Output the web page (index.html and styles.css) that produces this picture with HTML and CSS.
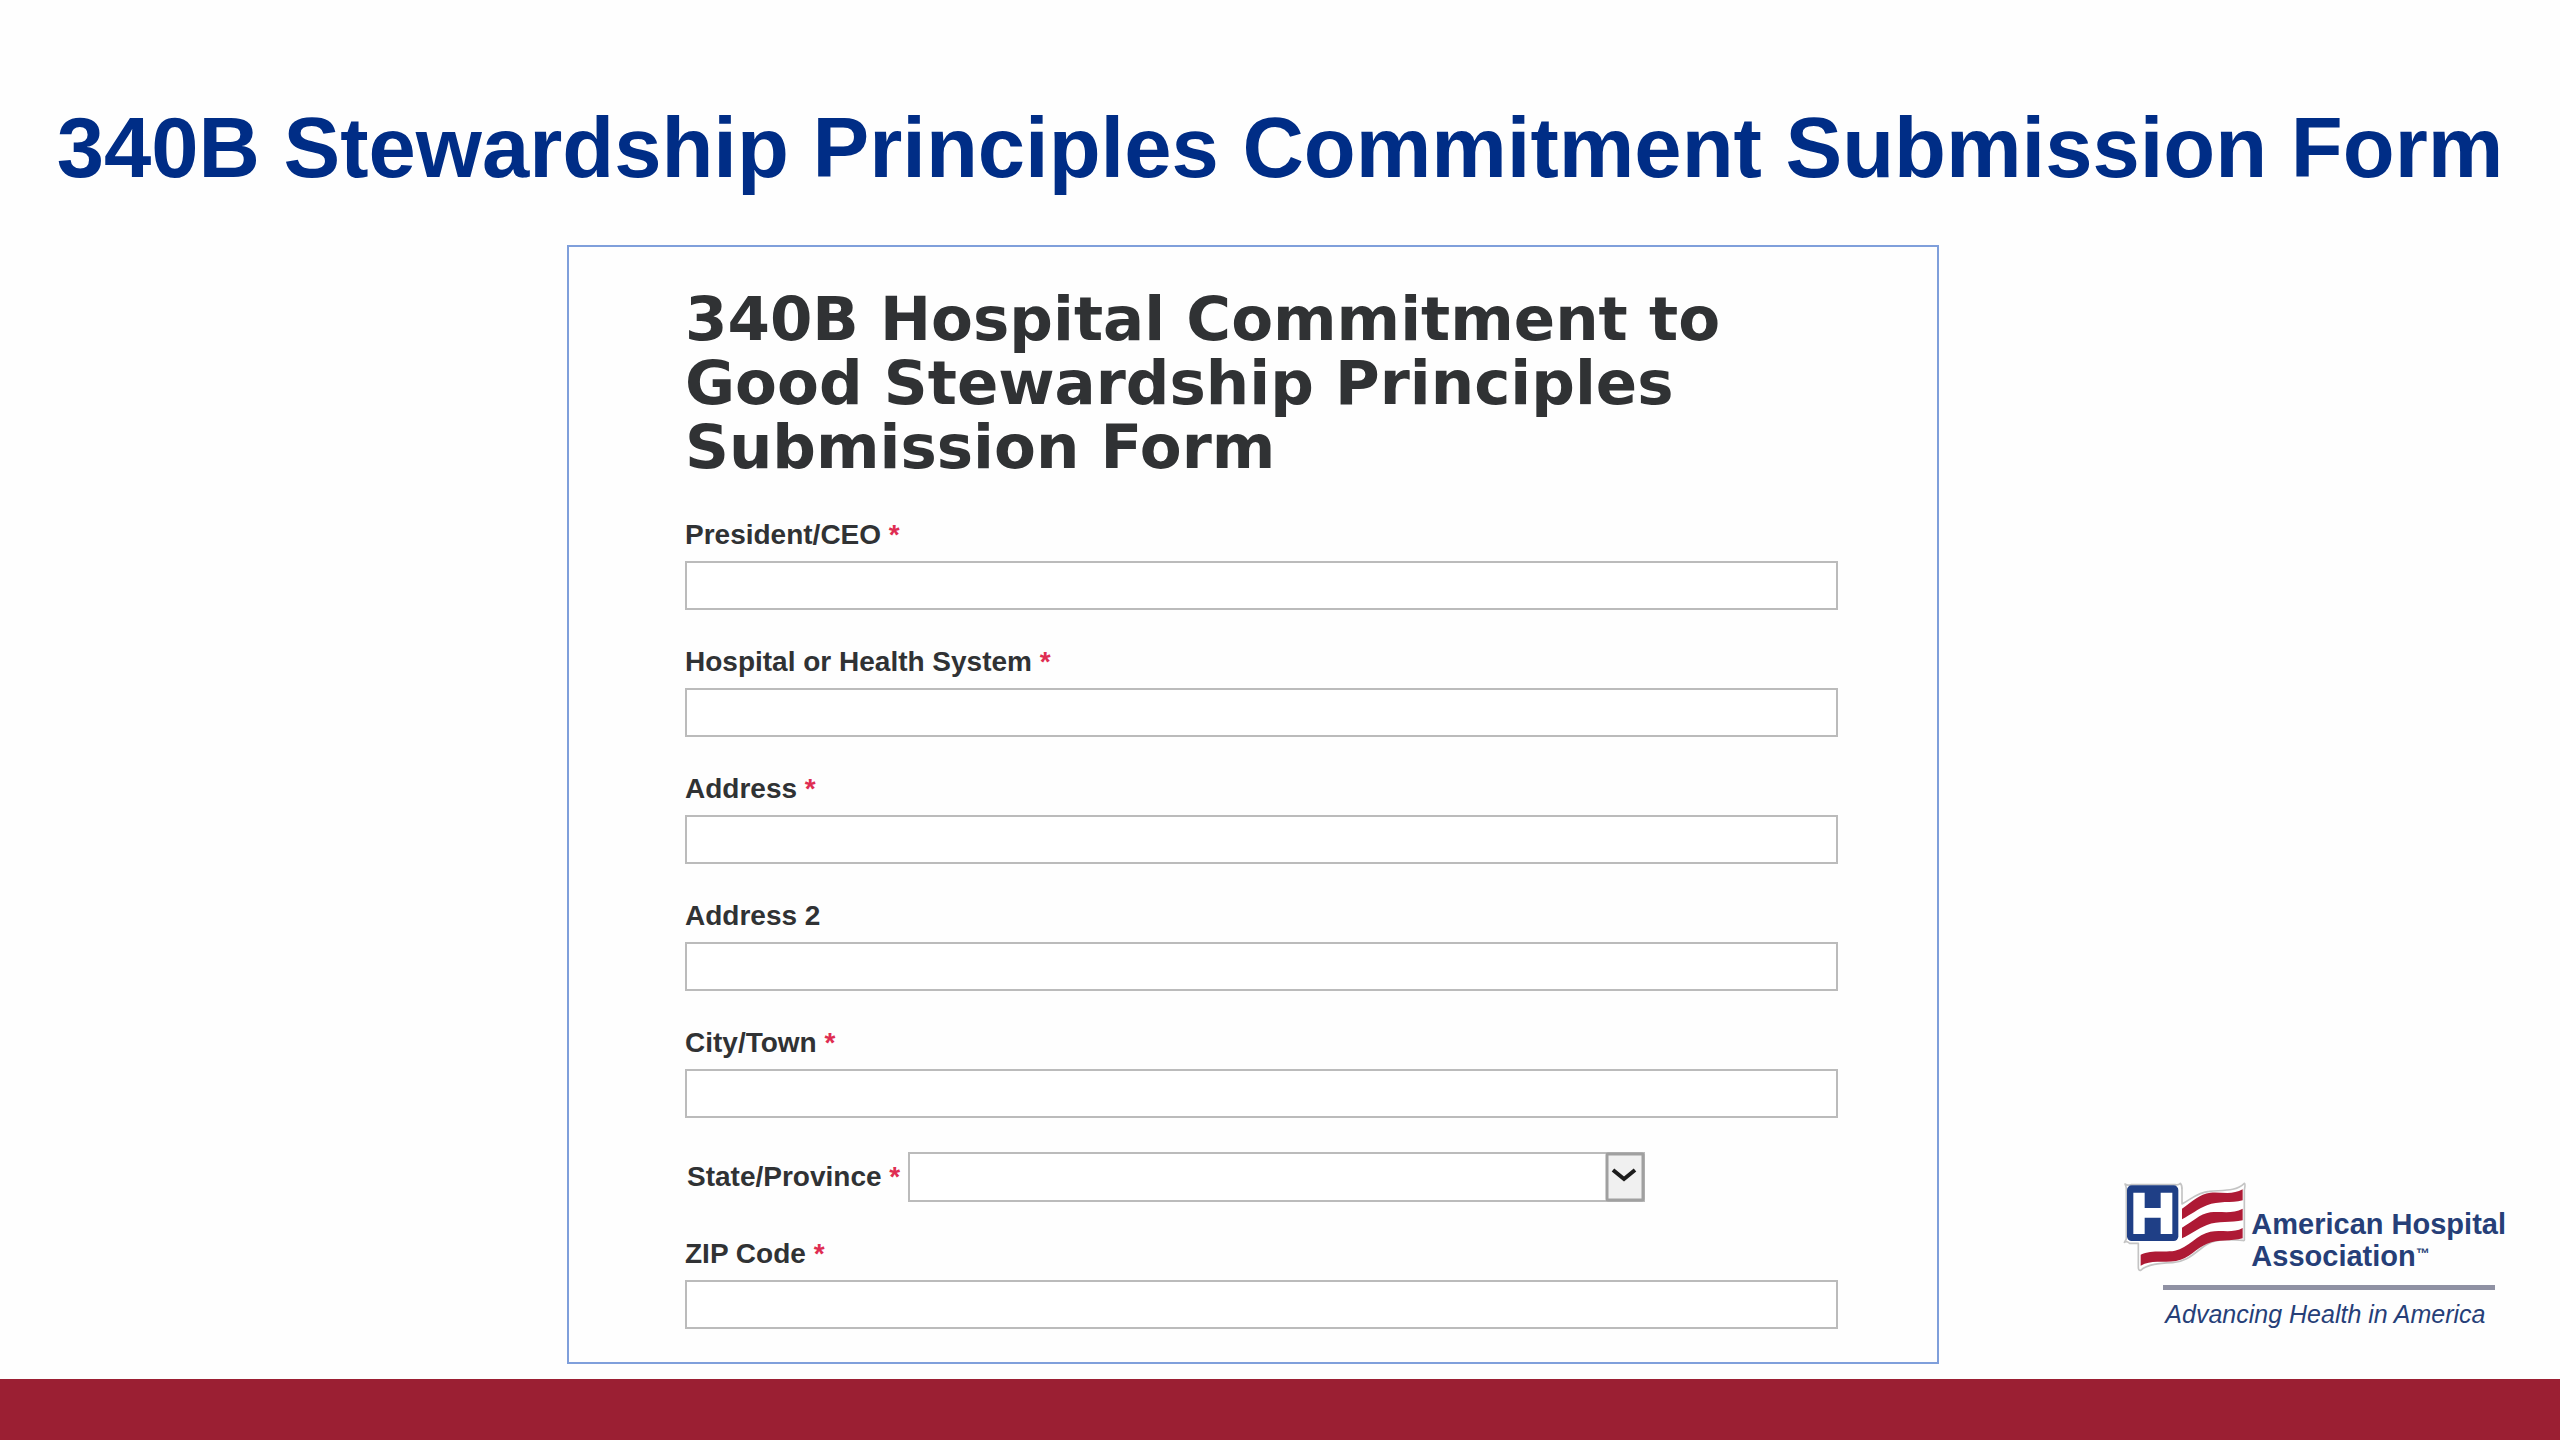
FILE: index.html
```
<!DOCTYPE html>
<html lang="en">
<head>
<meta charset="utf-8">
<meta name="viewport" content="width=device-width, initial-scale=1">
<title>340B Stewardship Principles Commitment Submission Form</title>
<link rel="stylesheet" href="styles.css">
</head>
<body>
<header class="banner">
  <h1 class="banner-title">340B Stewardship Principles Commitment Submission Form</h1>
</header>
<main class="content">
  <form class="card">
    <h2 class="card-title">340B Hospital Commitment to<br>Good Stewardship Principles<br>Submission Form</h2>
    <div class="fields">
      <div class="field">
        <label class="label" for="ceo">President/CEO <span class="required">*</span></label>
        <input class="control" id="ceo" type="text" required>
      </div>
      <div class="field">
        <label class="label" for="hospital">Hospital or Health System <span class="required">*</span></label>
        <input class="control" id="hospital" type="text" required>
      </div>
      <div class="field">
        <label class="label" for="address">Address <span class="required">*</span></label>
        <input class="control" id="address" type="text" required>
      </div>
      <div class="field">
        <label class="label" for="address2">Address 2</label>
        <input class="control" id="address2" type="text">
      </div>
      <div class="field">
        <label class="label" for="city">City/Town <span class="required">*</span></label>
        <input class="control" id="city" type="text" required>
      </div>
      <div class="field-inline">
        <label class="label" for="state">State/Province <span class="required">*</span></label>
        <div class="select-box">
          <select class="control select" id="state" required><option value=""></option></select>
          <svg class="select-arrow" viewBox="0 0 40 50" aria-hidden="true">
            <rect x="2" y="2" width="36" height="46" rx="1" fill="#f0f0f0" stroke="#a0a0a0" stroke-width="3"/>
            <path d="M8 18 L19 27 L30 18" fill="none" stroke="#1c1c1c" stroke-width="4"/>
          </svg>
        </div>
      </div>
      <div class="field">
        <label class="label" for="zip">ZIP Code <span class="required">*</span></label>
        <input class="control" id="zip" type="text" required>
      </div>
    </div>
  </form>
  <aside class="brand">
    <div class="brand-top">
      <svg class="brand-flag" viewBox="60 60 390 285" aria-hidden="true">
        <path d="M72 72 Q80 78 90 74 H222 Q232 76 238 70 Q244 76 243 90 V132 C270 118 290 96 325 94 C365 90 405 95 430 70 Q434 72 430 90 V235 Q432 244 424 241 C385 240 345 232 310 258 C275 284 255 306 215 308 C175 310 140 312 119 331 Q112 332 112 322 V250 H86 Q76 242 70 247 Q78 240 76 228 V88 Q76 80 72 72 Z" fill="#fff" stroke="#c4c4c4" stroke-width="5" stroke-linejoin="round"/>
        <rect x="78" y="76" width="154" height="167" rx="14" fill="#1f3f86"/>
        <path d="M97 98 H131 V144 H179 V98 H214 V222 H179 V173 H131 V222 H97 Z" fill="#fff"/>
        <g fill="#ae1a35">
          <path d="M243 146 C275 124 295 102 328 98 C362 95 395 106 425 88 V121 C390 130 352 122 318 136 C290 147 270 164 243 178 Z"/>
          <path d="M243 203 C275 186 295 162 328 157 C362 153 395 163 425 146 V181 C390 190 352 181 318 195 C290 206 270 223 243 235 Z"/>
          <path d="M119 284 C150 268 190 278 222 272 C260 264 290 222 328 215 C362 209 395 221 425 204 V235 C390 245 352 237 318 251 C285 264 265 296 225 303 C185 309 150 299 119 317 Z"/>
        </g>
      </svg>
      <p class="brand-name">American Hospital<br>Association<span class="brand-mark">™</span></p>
    </div>
    <hr class="brand-rule">
    <p class="brand-tagline">Advancing Health in America</p>
  </aside>
</main>
<footer class="bar"></footer>
</body>
</html>
```
FILE: styles.css
```
* {
  box-sizing: border-box;
}

body {
  display: flex;
  flex-direction: column;
  min-height: 100vh;
  margin: 0;
  background: #fefefe;
  color: #303234;
  font-family: "Liberation Sans", Arial, sans-serif;
}

.banner {
  padding: 100px 48px 49px;
}

.banner-title {
  margin: 0;
  color: #002d86;
  font-size: 85px;
  line-height: 96px;
  text-align: center;
}

.content {
  display: grid;
  grid-template-columns: 567fr 1372fr 621fr;
}

.card {
  grid-column: 2;
  padding: 40px 99px 33px 116px;
  border: 2px solid #7f9fdb;
}

.card-title {
  margin: 0 0 38px;
  font-family: "DejaVu Sans", Verdana, sans-serif;
  font-size: 61px;
  line-height: 64px;
  white-space: nowrap;
}

.fields {
  display: flex;
  flex-direction: column;
  gap: 34px;
}

.field {
  display: flex;
  flex-direction: column;
  gap: 8px;
}

.field-inline {
  display: flex;
  align-items: center;
  gap: 8px;
  padding-left: 2px;
}

.label {
  font-size: 28px;
  font-weight: bold;
  line-height: 36px;
}

.required {
  color: #df2d52;
}

.control {
  width: 100%;
  height: 49px;
  margin: 0;
  padding: 0 12px;
  border: 2px solid #bbb;
  border-radius: 0;
  background: #fff;
  color: inherit;
  font: 28px "Liberation Sans", Arial, sans-serif;
}

.select-box {
  position: relative;
  flex: 0 1 737px;
  height: 50px;
}

.select {
  height: 50px;
  appearance: none;
}

.select-arrow {
  position: absolute;
  top: 0;
  right: 0;
  width: 40px;
  height: 50px;
  pointer-events: none;
}

.brand {
  align-self: end;
  justify-self: end;
  padding: 0 54px 34px 0;
  color: #263f78;
}

.brand-top {
  display: flex;
}

.brand-flag {
  width: 130px;
  height: 95px;
}

.brand-name {
  margin: 0;
  padding-top: 28px;
  font-size: 29px;
  font-weight: bold;
  line-height: 32px;
  white-space: nowrap;
}

.brand-mark {
  font-size: 14px;
  line-height: 1;
  vertical-align: 8px;
}

.brand-rule {
  width: 332px;
  height: 5px;
  margin: 10px 0 8px 42px;
  border: 0;
  background: #8f91a3;
}

.brand-tagline {
  margin: 0 0 0 44px;
  font-size: 25px;
  font-style: italic;
  line-height: 32px;
}

.bar {
  flex: 1 0 61px;
  margin-top: 15px;
  background: #9b1f33;
}
```
